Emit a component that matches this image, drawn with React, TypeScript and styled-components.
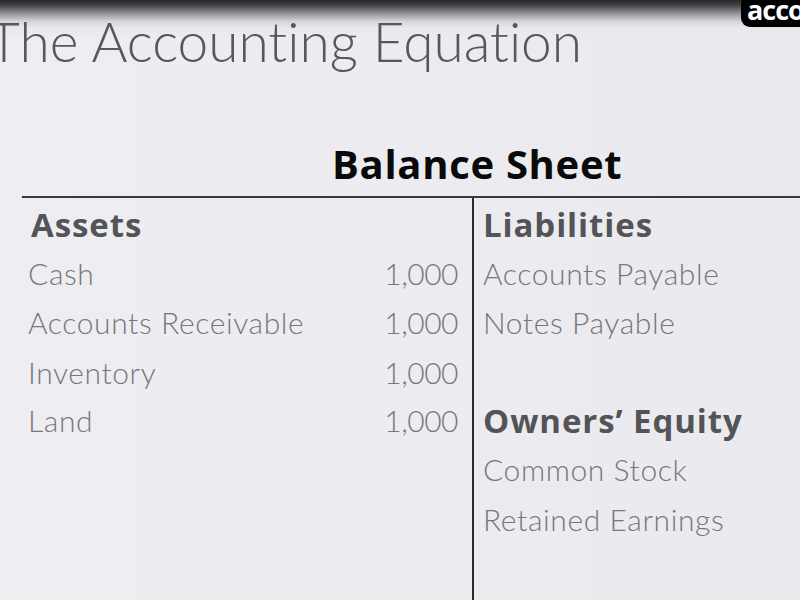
import styled, { createGlobalStyle } from 'styled-components';

const GlobalStyle = createGlobalStyle`
  html, body {
    margin: 0;
    padding: 0;
    background: #ebebef;
  }
  * {
    box-sizing: border-box;
  }
`;

type Row = { label: string; amount?: string; heading?: boolean };

const assets: Row[] = [
  { label: 'Assets', heading: true },
  { label: 'Cash', amount: '1,000' },
  { label: 'Accounts Receivable', amount: '1,000' },
  { label: 'Inventory', amount: '1,000' },
  { label: 'Land', amount: '1,000' },
];

const claims: Row[] = [
  { label: 'Liabilities', heading: true },
  { label: 'Accounts Payable' },
  { label: 'Notes Payable' },
  { label: '' },
  { label: 'Owners\u2019 Equity', heading: true },
  { label: 'Common Stock' },
  { label: 'Retained Earnings' },
];

export default function App() {
  return (
    <>
      <GlobalStyle />
      <Slide>
        <Badge>acco</Badge>
        <Title>The Accounting Equation</Title>
        <SheetTitle>Balance Sheet</SheetTitle>
        <TAccount>
          <Side left>
            {assets.map((row) => (
              <Line key={row.label}>
                {row.heading ? <Heading indent>{row.label}</Heading> : <Label>{row.label}</Label>}
                {row.amount && <Amount>{row.amount}</Amount>}
              </Line>
            ))}
          </Side>
          <Side>
            {claims.map((row, i) => (
              <Line key={i}>
                {row.heading ? <Heading>{row.label}</Heading> : <Label>{row.label}</Label>}
              </Line>
            ))}
          </Side>
        </TAccount>
      </Slide>
    </>
  );
}

const Slide = styled.div`
  position: relative;
  width: 800px;
  height: 600px;
  overflow: hidden;
  font-family: Lato, 'Open Sans', sans-serif;
  font-variant-ligatures: none;
  background: linear-gradient(
      to bottom,
      #262628 0px,
      #4a4a4c 6px,
      #8e8e92 13px,
      #d4d4d8 21px,
      #e9e9ed 28px,
      rgba(235, 235, 239, 0) 40px
    ),
    linear-gradient(to right, #eeeef2 0%, #ececf0 60%, #e9e9ee 100%);
`;

const Badge = styled.div`
  position: absolute;
  top: -5px;
  left: 741px;
  padding: 0 8px 2px 6px;
  border-radius: 9px;
  background: #000;
  color: #fff;
  font-family: 'Open Sans', sans-serif;
  font-weight: 700;
  font-size: 27px;
  line-height: 30px;
  letter-spacing: -1px;
`;

const Title = styled.h1`
  margin: 0;
  padding-top: 10px;
  margin-left: -12px;
  font-weight: 300;
  font-size: 55px;
  line-height: 62px;
  color: #58585c;
  white-space: nowrap;
`;

const SheetTitle = styled.div`
  padding: 67px 0 0 332px;
  margin-bottom: 7px;
  font-family: 'Open Sans', sans-serif;
  font-weight: 700;
  font-size: 40px;
  line-height: 50px;
  letter-spacing: 0.7px;
  color: #0a0a0a;
`;

const TAccount = styled.div`
  display: grid;
  grid-template-columns: 452px 1fr;
  margin: 0 0 0 22px;
  border-top: 2px solid #3a3a3c;
  height: 420px;
`;

const Side = styled.div<{ left?: boolean }>`
  display: grid;
  grid-template-rows: 49px 48px 50px 49px 48px 49px 52px;
  align-content: start;
  padding: 2px ${(p) => (p.left ? '14px' : '0')} 0 ${(p) => (p.left ? '6px' : '9px')};
  border-right: ${(p) => (p.left ? '2px solid #2a2a2c' : 'none')};
`;

const Line = styled.div`
  display: flex;
  align-items: center;
  justify-content: space-between;
  white-space: nowrap;
`;

const Heading = styled.span<{ indent?: boolean }>`
  padding-left: ${(p) => (p.indent ? '3px' : '0')};
  font-family: 'Open Sans', sans-serif;
  font-weight: 700;
  font-size: 33px;
  letter-spacing: 0.9px;
  color: #545458;
`;

const Label = styled.span`
  font-weight: 300;
  font-size: 30px;
  letter-spacing: 0.6px;
  color: #77777b;
`;

const Amount = styled(Label)`
  letter-spacing: -0.5px;
`;
